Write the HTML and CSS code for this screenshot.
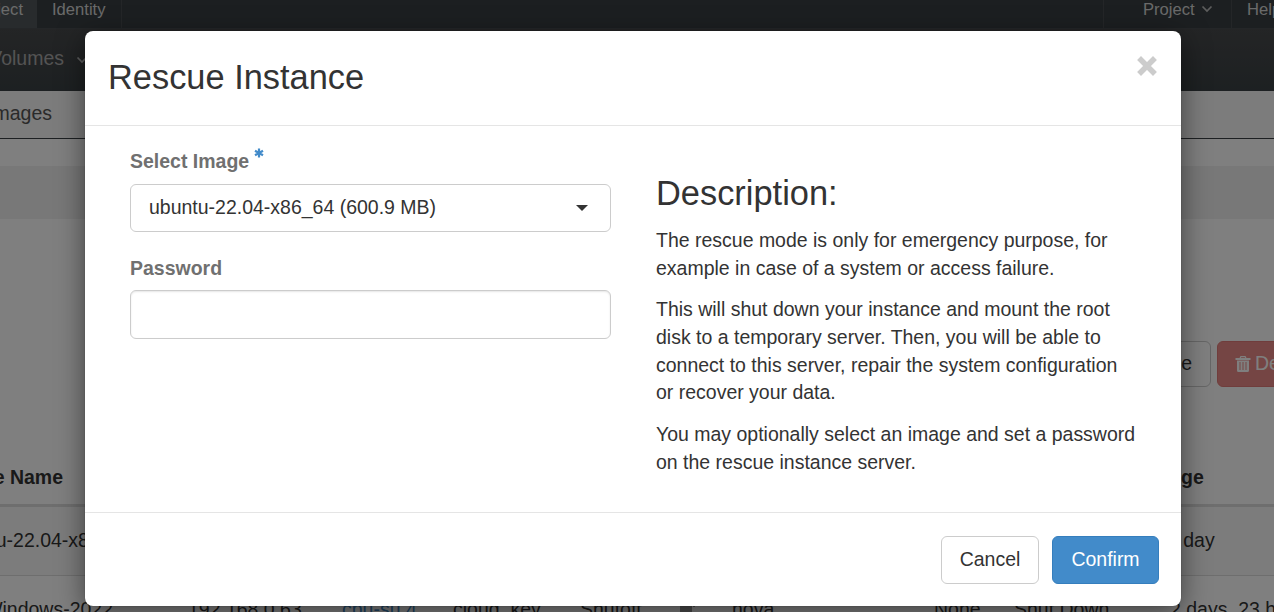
FILE: index.html
```html
<!DOCTYPE html>
<html lang="en">
<head>
<meta charset="utf-8">
<title>Rescue Instance</title>
<link rel="stylesheet" href="styles.css">
</head>
<body>
<div class="page">
  <nav class="topbar">
    <div class="tab active"><span>Project</span></div>
    <div class="tab identity"><span>Identity</span></div>
    <div class="spacer"></div>
    <div class="tab menu"><span>Project</span><svg class="chev" viewBox="0 0 12 8"><path d="M1.500 1.500 6 6l4.500-4.500"/></svg></div>
    <div class="tab help"><span>Help</span></div>
  </nav>
  <nav class="subbar"><div class="volumes"><span>Volumes</span><svg class="chev" viewBox="0 0 12 8"><path d="M1.500 1.500 6 6l4.500-4.500"/></svg></div></nav>
  <nav class="panelbar"><div class="images"><span>Images</span></div></nav>
  <div class="band"></div>
  <div class="actions">
    <div class="btn launch"><span>e</span></div>
    <div class="btn danger"><svg viewBox="0 0 16 16"><path fill-rule="evenodd" d="M5.500 0h5l1 2H15.500v2H.5V2h4zM6.200 1.200 5.900 2h4.200l-.3-.8zM2 4.500h12V14.500q0 1.500-1.500 1.500h-9Q2 16 2 14.500zM4.500 6v8h1V6zM7.500 6v8h1V6zM10.500 6v8h1V6z"/></svg><span>Delete Instances</span></div>
  </div>
  <div class="row head"><div class="end">Instance Name</div><div class="age">Age</div></div>
  <div class="row first"><div>ubuntu-22.04-x86_64</div><div class="age">1 day</div></div>
  <div class="row second">
    <div class="end">Windows-2022</div><div>192.168.0.63</div><div class="link">cpu-su.4</div><div>cloud_key</div><div>Shutoff</div><div><svg class="lock" viewBox="0 0 16 16"><path d="M1 6h12v10H1zM14 5h2v2h-2z"/></svg></div><div>nova</div><div>None</div><div>Shut Down</div><div>2 days, 23 hours</div>
  </div>
</div>
<div class="backdrop">
  <section class="modal">
    <header class="modal-header">
      <h3>Rescue Instance</h3>
      <svg class="close" viewBox="0 0 22 22"><path d="M5 5 17 17M17 5 5 17"/></svg>
    </header>
    <div class="modal-body">
      <form class="form">
        <label class="label">Select Image <svg class="star" viewBox="0 0 10 10"><path d="M5 .5v9M1 2.700l8 4.600M9 2.700 1 7.300"/></svg></label>
        <div class="select"><span>ubuntu-22.04-x86_64 (600.9 MB)</span><i class="caret"></i></div>
        <label class="label password">Password</label>
        <input class="input" type="password">
      </form>
      <article class="description">
        <h3>Description:</h3>
        <p>The rescue mode is only for emergency purpose, for<br>example in case of a system or access failure.</p>
        <p>This will shut down your instance and mount the root<br>disk to a temporary server. Then, you will be able to<br>connect to this server, repair the system configuration<br>or recover your data.</p>
        <p>You may optionally select an image and set a password<br>on the rescue instance server.</p>
      </article>
    </div>
    <footer class="modal-footer"><button type="button" class="button">Cancel</button><button type="button" class="button primary">Confirm</button></footer>
  </section>
</div>
</body>
</html>
```
FILE: styles.css
```css
* { box-sizing: border-box; }
html, body { height: 100%; margin: 0; overflow: hidden; }
body { font: 19.49px/27.7px "Liberation Sans", Arial, sans-serif; color: #333; }
.page { width: 1274px; height: 612px; overflow: hidden; background: #fff; white-space: nowrap; }
.topbar { display: flex; height: 29px; background: #383f42; border-bottom: 1px solid #484d50; font-size: 16.6px; line-height: 20px; color: #d4d4d4; }
.tab { height: 28px; border-right: 1px solid #484d50; flex: none; display: flex; }
.tab.active { width: 37px; background: #50575a; border: 0; justify-content: flex-end; padding-right: 14px; }
.identity { width: 85px; padding-left: 15px; }
.spacer { flex: 1; border-right: 1px solid #484d50; }
.menu { width: 128px; padding-left: 39px; gap: 6px; }
.help { width: 42px; padding-left: 15px; border: 0; }
.chev { width: 12px; height: 8px; fill: none; stroke: #bbb; stroke-width: 1.7; flex: none; margin-top: 5px; }
.subbar { height: 62px; background: linear-gradient(#484a4c, #3a4144); color: #a8a8a8; }
.volumes { width: 88px; height: 62px; display: flex; justify-content: flex-end; align-items: center; gap: 12px; padding-bottom: 3px; }
.volumes .chev { margin-top: 3px; }
.panelbar { height: 48px; background: #f8f8f8; border-bottom: 1px solid #3a4144; color: #555; }
.images { width: 52px; display: flex; justify-content: flex-end; padding-top: 9px; }
.band { height: 53px; margin-top: 27px; background: #f1f1f1; }
.actions { display: flex; justify-content: flex-end; gap: 6px; width: 1411px; margin-top: 122px; }
.btn { height: 46px; border: 1px solid #ccc; border-radius: 6px; display: flex; align-items: center; padding: 0 18px 1px; flex: none; }
.btn.danger { width: 194px; background: #ea8b88; border-color: #e07b78; color: #fff; padding: 0 18px 1px 17px; gap: 4px; }
.btn svg { width: 16px; height: 16px; fill: #fff; flex: none; }
.row { display: grid; grid-template-columns: 63px 1fr; }
.end { display: flex; justify-content: flex-end; }
.head { height: 120px; padding-top: 77px; border-bottom: 3px solid #ddd; font-weight: bold; }
.head .age { padding-left: 1104px; }
.first { height: 69px; background: #f9f9f9; border-bottom: 1px solid #ddd; padding-top: 20px; grid-template-columns: 1167px 1fr; }
.first > :first-child { margin-left: -53px; }
.second { padding-top: 20px; grid-template-columns: 113px 229px 111px 127px 99px 53px 202px 80px 156px 1fr; }
.second > :nth-child(2) { padding-left: 75px; }
.link { color: #428bca; }
.lock { width: 16px; height: 16px; fill: #999; }
.backdrop { position: absolute; inset: 0; padding: 31px 85px 0; background: rgba(0,0,0,.5); }
.modal { width: 1096px; height: 575px; background: #fff; border-radius: 8px; box-shadow: 0 7px 28px rgba(0,0,0,.5), 0 0 1px rgba(0,0,0,.5); display: flex; flex-direction: column; }
h3 { margin: 0; font-weight: 400; font-size: 34.4px; line-height: 40px; }
.modal-header { flex: none; height: 95px; border-bottom: 1px solid #e5e5e5; padding: 26px 23px 0; display: flex; justify-content: space-between; }
.close { width: 22px; height: 22px; margin-top: -2px; fill: none; stroke: #ccc; stroke-width: 5.500; stroke-linecap: square; }
.modal-body { height: 387px; display: grid; grid-template-columns: 481px 1fr; column-gap: 45px; padding: 22px 22px 0 45px; border-bottom: 1px solid #e5e5e5; flex: none; }
.form { display: flex; flex-direction: column; }
.label { font-weight: bold; color: #707070; height: 36px; white-space: nowrap; }
.password { padding-top: 1px; }
.star { width: 10px; height: 10px; fill: none; stroke: #428bca; stroke-width: 2.200; vertical-align: 10px; margin-left: -.5px; }
.select { height: 48px; border: 1px solid #ccc; border-radius: 6px; display: flex; align-items: center; justify-content: space-between; padding: 0 22px 0 18px; margin-bottom: 22px; }
.caret { border: 6px solid transparent; border-top-color: #333; border-bottom: 0; }
.input { height: 49px; border: 1px solid #ccc; border-radius: 6px; box-shadow: inset 0 1px 2px rgba(0,0,0,.1); padding: 0 18px; font: inherit; outline: 0; }
.description { padding-top: 25px; white-space: nowrap; }
.description h3 { margin-bottom: 14px; }
p { margin: 0 0 13.900px; }
.modal-footer { display: flex; justify-content: flex-end; gap: 13px; padding: 23px 22px; }
.button { width: 98px; height: 48px; border: 1px solid #ccc; border-radius: 6px; background: #fff; color: #333; font: inherit; padding: 0 0 1px; }
.primary { width: 107px; background: #428bca; border-color: #357ebd; color: #fff; }
```
